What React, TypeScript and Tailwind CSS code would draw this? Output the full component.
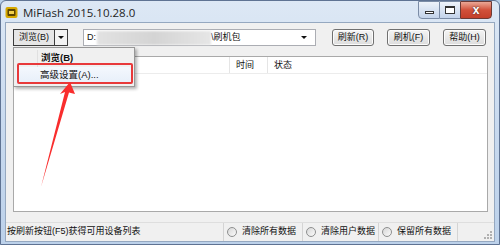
import React from "react";

const FONT = { fontFamily: '"Liberation Sans", "Noto Sans CJK SC", sans-serif' };

function AppIcon() {
  return (
    <svg width="13" height="13" viewBox="0 0 13 13">
      <rect x="0.5" y="1" width="12" height="11" rx="2" fill="#d6a800" />
      <rect x="2.5" y="3" width="8" height="7" rx="1" fill="#5a4300" />
      <rect x="4" y="5" width="5" height="3" fill="#f2d04a" />
    </svg>
  );
}

function CaptionButtons() {
  return (
    <div className="flex items-start">
      <div className="flex h-[18px] w-[22px] items-end justify-center rounded-bl-[4px] border border-[#7b8ca6] bg-gradient-to-b from-[#eef3fa] to-[#c3d3ea] pb-[4px]">
        <div className="h-[3px] w-[9px] border border-[#333] bg-white" />
      </div>
      <div className="flex h-[18px] w-[20px] items-center justify-center border-y border-[#7b8ca6] bg-gradient-to-b from-[#eef3fa] to-[#c3d3ea]">
        <div className="h-[8px] w-[10px] border border-t-2 border-[#333] bg-white" />
      </div>
      <div className="flex h-[18px] w-[32px] items-center justify-center rounded-br-[4px] border border-[#6d3a35] bg-gradient-to-b from-[#eaa796] via-[#d1503a] to-[#c43f2a]">
        <span className="text-[12px] font-bold leading-none text-white" style={{ textShadow: "0 0 2px #222" }}>x</span>
      </div>
    </div>
  );
}

function Btn({ children, w }: { children: React.ReactNode; w: string }) {
  return (
    <div className={`flex h-[17px] ${w} items-center justify-center rounded-[3px] border border-[#707070] bg-gradient-to-b from-[#f4f4f4] to-[#dddddd] text-[9px] text-[#111] shadow-[inset_0_0_0_1px_#fcfcfc]`}>
      {children}
    </div>
  );
}

function Radio({ label, w }: { label: string; w: string }) {
  return (
    <div className={`flex h-full ${w} items-center gap-[5px] border-l border-[#d4d4d4] pl-[3px]`}>
      <div className="h-[10px] w-[10px] rounded-full border border-[#8e8f8f] bg-gradient-to-br from-[#d6d6d6] to-[#fbfbfb]" />
      <span>{label}</span>
    </div>
  );
}

export default function App() {
  return (
    <div className="h-[245px] w-[500px] overflow-hidden bg-[#b9d1ea]" style={FONT}>
      <div className="flex h-[245px] flex-col rounded-t-[6px] border border-[#5f7393] bg-gradient-to-b from-[#dde8f5] via-[#c9daef] to-[#bcd1ea]">
        {/* title bar */}
        <div className="flex h-[21px] items-start justify-between pl-[4px] pr-[7px]">
          <div className="flex items-center gap-[5px] pt-[3px]">
            <AppIcon />
            <span className="text-[11.5px] text-[#1e1e1e]" style={{ fontFamily: '"Open Sans", "Noto Sans", sans-serif' }}>
              MiFlash 2015.10.28.0
            </span>
          </div>
          <CaptionButtons />
        </div>

        {/* client area */}
        <div className="mx-[4px] flex flex-col border border-[#95a8c0] bg-[#f0f0f0]">
          {/* toolbar */}
          <div className="flex items-center pl-[7px] pt-[6px] text-[9px] text-[#111]">
            <div className="flex h-[17px]">
              <div className="flex w-[42px] items-center justify-center border border-[#3c3c3c] bg-[#e6e6e6]">浏览(B)</div>
              <div className="flex w-[13px] items-center justify-center border border-l-0 border-[#3c3c3c] bg-[#f3f3f3]">
                <div className="h-0 w-0 border-x-[3px] border-t-[3px] border-x-transparent border-t-[#111]" />
              </div>
            </div>
            <div className="ml-[15px] flex h-[17px] w-[233px] items-center justify-between border border-[#abadb3] bg-white pl-[3px] pr-[8px]">
              <div className="flex items-center">
                <span>D:</span>
                <div className="ml-[1px] h-[14px] w-[114px] bg-gradient-to-r from-[#e2e2e2] via-[#d4d4d4] to-[#e6e6e6] blur-[1px]" />
                <span>\刷机包</span>
              </div>
              <div className="h-0 w-0 border-x-[3px] border-t-[3px] border-x-transparent border-t-[#111]" />
            </div>
            <div className="ml-[16px] flex gap-[13px]">
              <Btn w="w-[42px]">刷新(R)</Btn>
              <Btn w="w-[43px]">刷机(F)</Btn>
              <Btn w="w-[43px]">帮助(H)</Btn>
            </div>
          </div>

          {/* list view */}
          <div className="relative ml-[7px] mt-[10px] h-[156px] w-[475px] border border-[#a9a9a9] bg-white">
            <div className="flex h-[17px] border-b border-[#ececec] text-[9px] text-[#111]">
              <div className="w-[216px] border-r border-[#e5e5e5]" />
              <div className="w-[38px] border-r border-[#e5e5e5] pl-[6px] leading-[17px]">时间</div>
              <div className="pl-[6px] leading-[17px]">状态</div>
            </div>

            {/* dropdown menu */}
            <div className="absolute left-[-1px] top-[-10px] w-[122px] border border-[#979797] bg-[#f0f0f0] py-[2px] pl-[2px] pr-[3px] text-[9.5px] text-[#111] shadow-[2px_2px_3px_rgba(0,0,0,0.3)]">
              <div className="flex h-[17px] items-center">
                <div className="h-full w-[22px] border-r border-[#e0e0e0]" />
                <span className="pl-[3px] font-bold">浏览(B)</span>
              </div>
              <div className="flex h-[17px] items-center rounded-[2px] bg-gradient-to-b from-[#f4f8fd] to-[#e6eef9]">
                <span className="pl-[24px]">高级设置(A)...</span>
              </div>
              <div className="absolute left-[3px] top-[15px] h-[21px] w-[116px] rounded-[2px] border-2 border-[#e8393a]" />
            </div>

            {/* red arrow annotation */}
            <svg className="absolute left-[20px] top-[20px]" width="50" height="115" viewBox="0 0 50 115">
              <polygon points="36,5 41,17 35,15.5 7,110 31,15 26,17" fill="#f92d2d" />
            </svg>
          </div>

          {/* status bar */}
          <div className="mt-[10px] flex h-[19px] items-center border-t border-[#dedede] text-[9px] text-[#111]">
            <div className="w-[217px] pl-[1px]">按刷新按钮(F5)获得可用设备列表</div>
            <Radio w="w-[79px]" label="清除所有数据" />
            <Radio w="w-[76px]" label="清除用户数据" />
            <Radio w="w-[79px]" label="保留所有数据" />
            <div className="relative h-full flex-1 border-l border-[#d4d4d4]">
              <svg className="absolute bottom-[1px] right-[1px]" width="10" height="10" viewBox="0 0 10 10">
                <rect x="7" y="1" width="2" height="2" fill="#b0b0b0" />
                <rect x="4" y="4" width="2" height="2" fill="#b0b0b0" />
                <rect x="7" y="4" width="2" height="2" fill="#b0b0b0" />
                <rect x="1" y="7" width="2" height="2" fill="#b0b0b0" />
                <rect x="4" y="7" width="2" height="2" fill="#b0b0b0" />
                <rect x="7" y="7" width="2" height="2" fill="#b0b0b0" />
              </svg>
            </div>
          </div>
        </div>
      </div>
    </div>
  );
}
